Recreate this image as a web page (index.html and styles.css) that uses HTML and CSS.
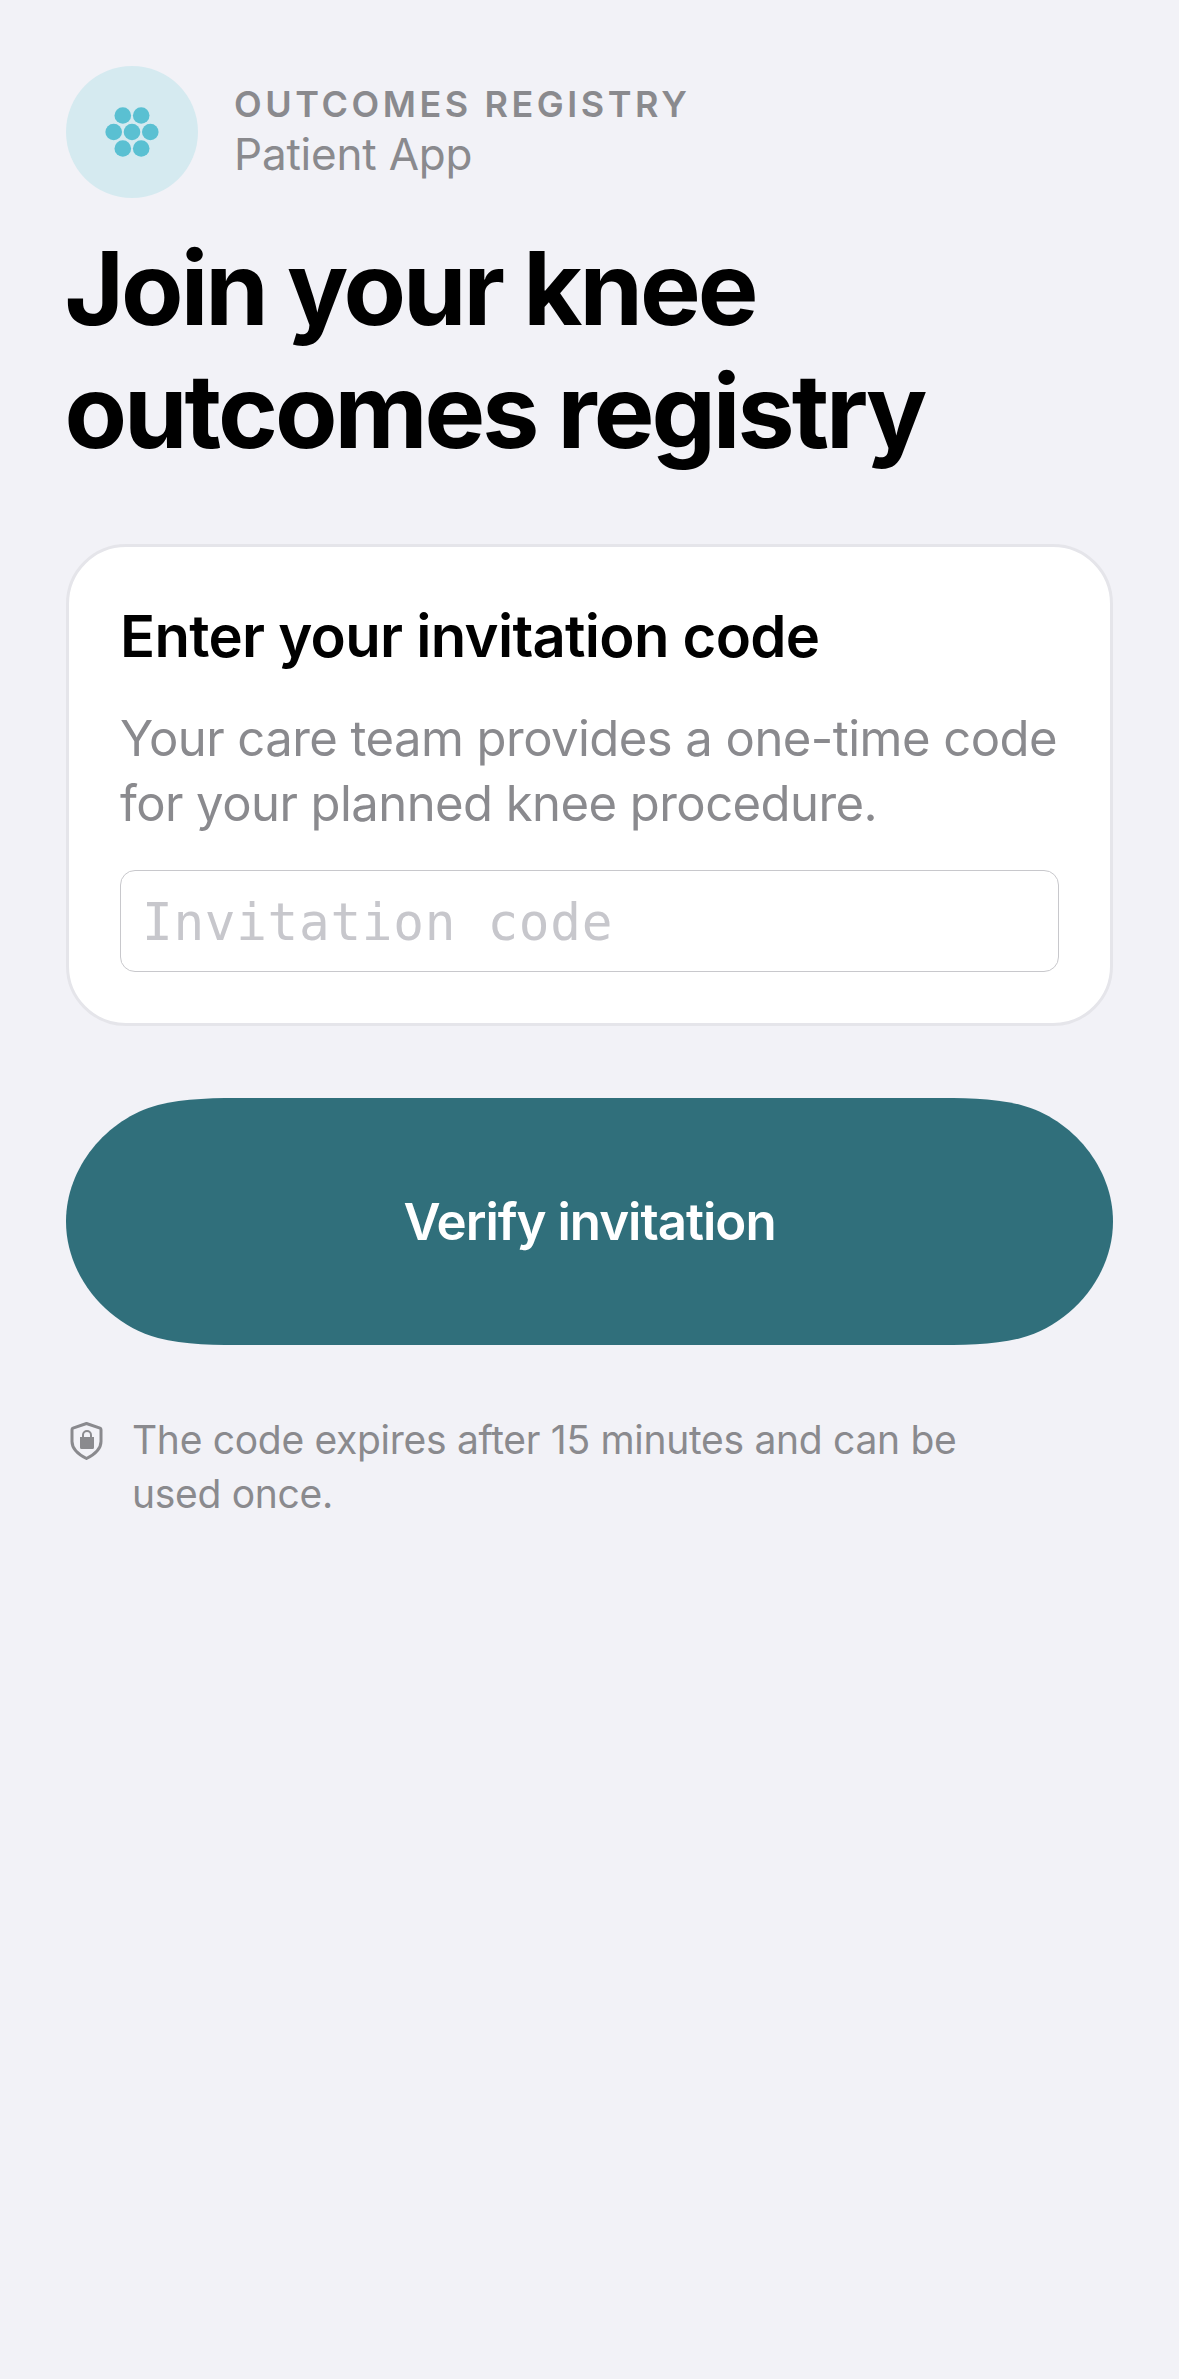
FILE: index.html
```html
<!DOCTYPE html>
<html lang="en">
<head>
<meta charset="utf-8">
<title>Join your knee outcomes registry</title>
<link rel="stylesheet" href="styles.css">
</head>
<body>
<main class="screen">
  <header class="brand">
    <div class="brand-mark">
      <svg class="brand-icon" viewBox="0 0 54 50" width="54" height="50" aria-hidden="true">
        <circle cx="17.800" cy="8.500" r="8.300"/><circle cx="36.200" cy="8.500" r="8.300"/>
        <circle cx="8.700" cy="25" r="8.300"/><circle cx="27" cy="25" r="8.300"/><circle cx="45.300" cy="25" r="8.300"/>
        <circle cx="17.800" cy="41.500" r="8.300"/><circle cx="36.200" cy="41.500" r="8.300"/>
      </svg>
    </div>
    <div class="brand-text">
      <div class="brand-eyebrow">OUTCOMES REGISTRY</div>
      <div class="brand-name">Patient App</div>
    </div>
  </header>
  <h1 class="title">Join your knee<br>outcomes registry</h1>
  <section class="card">
    <h2 class="card-title">Enter your invitation code</h2>
    <p class="card-copy">Your care team provides a one-time code for your planned knee procedure.</p>
    <input class="code-input" type="text" placeholder="Invitation code" aria-label="Invitation code">
  </section>
  <button class="verify" type="button">Verify invitation</button>
  <div class="note">
    <svg class="note-icon" viewBox="0 0 33 39" width="33" height="39" aria-hidden="true">
      <path class="shield" d="M16.500 1.500 L30 6.200 Q31 6.600 31 7.700 V19.500 C31 27.500 24.500 32.500 16.500 36.500 C8.500 32.500 2 27.500 2 19.500 V7.700 Q2 6.600 3 6.200 Z"/>
      <path class="lock" d="M10 15 h2 v-2 a5 5 0 0 1 10 0 v2 h2 v10.500 q0 1.500 -1.500 1.500 h-11 q-1.500 0 -1.500 -1.500 Z M14 15 h6 v-2 a3 3 0 0 0 -6 0 Z"/>
    </svg>
    <p class="note-text">The code expires after 15 minutes and can be used once.</p>
  </div>
</main>
</body>
</html>
```
FILE: styles.css
```css
* { box-sizing: border-box; }
html, body { margin: 0; padding: 0; }
body {
  background: #f2f2f7;
  font-family: Inter, "Liberation Sans", sans-serif;
  width: 1179px;
  height: 2379px;
  overflow: hidden;
}
.screen {
  padding: 66px 66px 0;
  display: flex;
  flex-direction: column;
}
.brand {
  display: flex;
  align-items: center;
  gap: 36px;
}
.brand-mark {
  width: 132px;
  height: 132px;
  border-radius: 50%;
  background: #d5eaf0;
  display: flex;
  align-items: center;
  justify-content: center;
  flex: none;
}
.brand-icon { fill: #5ac0d2; display: block; }
.brand-text { display: flex; flex-direction: column; }
.brand-eyebrow {
  font-size: 36px;
  line-height: 44px;
  font-weight: 600;
  letter-spacing: 3.550px;
  color: #8a8a8e;
  margin-top: -3px;
}
.brand-name {
  font-size: 44px;
  line-height: 50px;
  letter-spacing: -0.200px;
  color: #8a8a8e;
  margin-top: 3px;
}
.title {
  margin: 29px 0 0 -1.500px;
  font-size: 102px;
  line-height: 123px;
  font-weight: 700;
  letter-spacing: -3px;
  color: #000;
}
.card {
  margin-top: 71px;
  height: 482px;
  padding: 54px 51px 0;
  background: #fff;
  border: 3px solid #e5e5ea;
  border-radius: 60px;
}
.card-title {
  margin: 0;
  font-size: 58px;
  line-height: 70px;
  font-weight: 600;
  letter-spacing: -0.700px;
  color: #000;
}
.card-copy {
  margin: 35px 0 0;
  font-size: 49px;
  line-height: 65px;
  letter-spacing: -0.550px;
  color: #8a8a8e;
}
.code-input {
  display: block;
  width: 939px;
  height: 102px;
  margin-top: 34px;
  padding: 3px 21px 0;
  background: #fff;
  border: 1px solid #c8c8cc;
  border-radius: 15px;
  font-family: "DejaVu Sans Mono", "Liberation Mono", monospace;
  font-size: 51px;
  letter-spacing: 0.700px;
  color: #000;
  outline: none;
}
.code-input::placeholder { color: #c7c7cc; opacity: 1; }
.verify {
  display: block;
  margin-top: 72px;
  width: 1047px;
  height: 247px;
  border: 0;
  background: #306f7b;
  clip-path: path("M184 0 H863 C897 0 929 0 955 7 C1007 21 1047 70 1047 123.500 C1047 177 1007 226 955 240 C929 247 897 247 863 247 H184 C150 247 118 247 92 240 C40 226 0 177 0 123.500 C0 70 40 21 92 7 C118 0 150 0 184 0 Z");
  color: #fff;
  font-family: inherit;
  font-size: 51px;
  font-weight: 600;
  letter-spacing: -1px;
}
.note {
  margin-top: 68px;
  display: flex;
  align-items: flex-start;
  gap: 27px;
  padding-left: 4px;
}
.note-icon { flex: none; margin-top: 9px; }
.shield { fill: none; stroke: #8a8a8e; stroke-width: 3; stroke-linejoin: round; }
.lock { fill: #8a8a8e; fill-rule: evenodd; }
.note-text {
  margin: 0 0 0 2px;
  width: 860px;
  font-size: 39px;
  line-height: 54px;
  letter-spacing: -0.300px;
  color: #8a8a8e;
}
```
